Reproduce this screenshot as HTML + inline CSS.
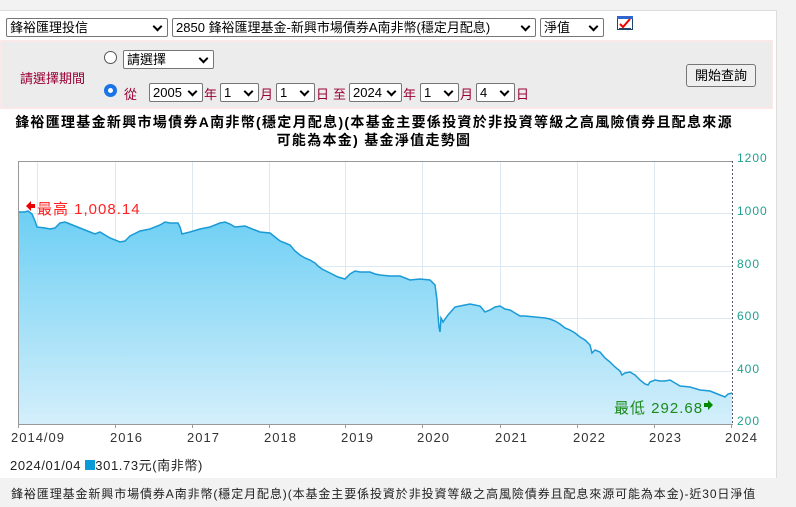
<!DOCTYPE html>
<html><head><meta charset="utf-8"><style>
*{box-sizing:border-box;margin:0;padding:0}
body{width:796px;height:507px;overflow:hidden;background:#f2f2f2;font-family:"Liberation Sans","Noto Sans CJK TC",sans-serif;position:relative;font-size:13px;color:#000}
.abs{position:absolute}
.panel{left:0;top:10px;width:777px;height:468px;background:#fff;border-top:1px solid #ddd;border-right:1px solid #ddd}
.sel{position:absolute;height:19px;border:1px solid #767676;border-radius:2px;background:#fff;font-size:13px;line-height:17px;padding-left:3px;white-space:nowrap;overflow:hidden}
.sel:after{content:"";position:absolute;right:6px;top:4px;width:5px;height:5px;border-right:2px solid #000;border-bottom:2px solid #000;transform:rotate(45deg)}
.form{left:0;top:40px;width:773px;height:69px;background:#ececec;border:2px solid #fbe8e8}
.red{color:#990033;font-size:13px}
.radio{position:absolute;width:13px;height:13px;border-radius:50%;border:1px solid #555;background:#fff}
.title{left:8px;width:732px;text-align:center;font-weight:bold;font-size:14px;letter-spacing:1.3px;line-height:18px}
.yl{position:absolute;left:737px;color:#20a090;font-size:12px;letter-spacing:1px}
.xl{position:absolute;top:430px;color:#333;font-size:13px;letter-spacing:1px}
</style></head><body>
<div class="abs panel"></div>
<div class="sel" style="left:6px;top:18px;width:162px">鋒裕匯理投信</div>
<div class="sel" style="left:172px;top:18px;width:364px">2850 鋒裕匯理基金-新興市場債券A南非幣(穩定月配息)</div>
<div class="sel" style="left:540px;top:18px;width:64px">淨值</div>
<svg class="abs" style="left:617px;top:16px" width="16" height="14"><rect x="0.5" y="0.5" width="15" height="13" fill="#fff" stroke="#246"/><rect x="0" y="0" width="16" height="3" fill="#36c"/><path d="M3 8l3 3 7-8" stroke="#e00" stroke-width="2" fill="none"/><line x1="2" y1="12.5" x2="14" y2="12.5" stroke="#246"/></svg>
<div class="abs form"></div>
<div class="radio" style="left:104px;top:51px"></div>
<div class="sel" style="left:123px;top:50px;width:91px">請選擇</div>
<div class="abs red" style="left:20px;top:68px">請選擇期間</div>
<div class="radio" style="left:104px;top:84px;border:4px solid #1a73e8"></div>
<div class="abs red" style="left:124px;top:84px">從</div>
<div class="sel" style="left:149px;top:83px;width:54px">2005</div><div class="abs red" style="left:204px;top:84px">年</div>
<div class="sel" style="left:220px;top:83px;width:39px">1</div><div class="abs red" style="left:260px;top:84px">月</div>
<div class="sel" style="left:276px;top:83px;width:39px">1</div><div class="abs red" style="left:316px;top:84px">日</div>
<div class="abs red" style="left:333px;top:84px">至</div>
<div class="sel" style="left:349px;top:83px;width:53px">2024</div><div class="abs red" style="left:403px;top:84px">年</div>
<div class="sel" style="left:420px;top:83px;width:39px">1</div><div class="abs red" style="left:460px;top:84px">月</div>
<div class="sel" style="left:476px;top:83px;width:39px">4</div><div class="abs red" style="left:516px;top:84px">日</div>
<div class="abs" style="left:686px;top:64px;width:70px;height:23px;border:1px solid #767676;border-radius:3px;background:#efefef;text-align:center;line-height:21px;font-size:13px">開始查詢</div>
<div class="abs title" style="top:113px">鋒裕匯理基金新興市場債券A南非幣(穩定月配息)(本基金主要係投資於非投資等級之高風險債券且配息來源</div>
<div class="abs title" style="top:131px">可能為本金) 基金淨值走勢圖</div>
<svg class="abs" style="left:0;top:0" width="796" height="507">
<defs><linearGradient id="g" x1="0" y1="0" x2="0" y2="1"><stop offset="0" stop-color="#6ccff4"/><stop offset="1" stop-color="#d4effb"/></linearGradient></defs>
<g stroke="#dce8f2" stroke-width="1">
<line x1="18" y1="213.5" x2="732" y2="213.5"/><line x1="18" y1="266.5" x2="732" y2="266.5"/><line x1="18" y1="318.5" x2="732" y2="318.5"/><line x1="18" y1="371.5" x2="732" y2="371.5"/>
<line x1="37.5" y1="161" x2="37.5" y2="424"/><line x1="115.5" y1="161" x2="115.5" y2="424"/><line x1="192.5" y1="161" x2="192.5" y2="424"/><line x1="269.5" y1="161" x2="269.5" y2="424"/><line x1="345.5" y1="161" x2="345.5" y2="424"/><line x1="422.5" y1="161" x2="422.5" y2="424"/><line x1="500.5" y1="161" x2="500.5" y2="424"/><line x1="577.5" y1="161" x2="577.5" y2="424"/><line x1="654.5" y1="161" x2="654.5" y2="424"/>
</g>
<path id="p" d="M18 212L25 212 28 211 32 214 35 221 37 227 45 228 50 229 55 228 60 223 65 222 70 224 80 228 90 232 95 234 100 232 110 238 120 242 125 241 130 236 140 231 150 229 160 225 165 222 170 223 178 223 180 227 182 234 190 232 200 229 210 227 220 223 225 222 230 224 235 227 245 226 255 230 260 232 270 233 275 237 280 241 290 245 295 251 300 255 305 258 310 260 315 263 318 266 322 269 330 273 338 277 345 279 350 274 355 271 360 272 370 272 375 274 380 275 390 276 400 276 410 280 420 279 430 280 435 285 437 300 438 315 439 327 440 332 441 318 443 322 448 315 455 307 460 306 465 305 470 304 480 306 485 312 490 310 495 307 500 306 505 309 510 310 515 313 520 316 525 316 535 317 545 318 550 319 555 321 560 324 565 328 570 330 575 333 580 337 585 340 590 345 592 353 595 350 600 352 605 358 610 362 615 367 620 371 622 375 625 373 630 372 635 375 640 380 645 384 648 385 650 382 655 380 660 381 665 381 670 380 675 383 680 386 690 387 700 390 710 391 715 393 720 395 725 397 728 394 732 393" fill="none"/>
<path d="M18 212L25 212 28 211 32 214 35 221 37 227 45 228 50 229 55 228 60 223 65 222 70 224 80 228 90 232 95 234 100 232 110 238 120 242 125 241 130 236 140 231 150 229 160 225 165 222 170 223 178 223 180 227 182 234 190 232 200 229 210 227 220 223 225 222 230 224 235 227 245 226 255 230 260 232 270 233 275 237 280 241 290 245 295 251 300 255 305 258 310 260 315 263 318 266 322 269 330 273 338 277 345 279 350 274 355 271 360 272 370 272 375 274 380 275 390 276 400 276 410 280 420 279 430 280 435 285 437 300 438 315 439 327 440 332 441 318 443 322 448 315 455 307 460 306 465 305 470 304 480 306 485 312 490 310 495 307 500 306 505 309 510 310 515 313 520 316 525 316 535 317 545 318 550 319 555 321 560 324 565 328 570 330 575 333 580 337 585 340 590 345 592 353 595 350 600 352 605 358 610 362 615 367 620 371 622 375 625 373 630 372 635 375 640 380 645 384 648 385 650 382 655 380 660 381 665 381 670 380 675 383 680 386 690 387 700 390 710 391 715 393 720 395 725 397 728 394 732 393L732 424 18 424Z" fill="url(#g)"/>
<use href="#p" stroke="#1a9ad6" stroke-width="1.5"/>
<line x1="18.5" y1="161" x2="18.5" y2="424" stroke="#999"/>
<line x1="18" y1="161.5" x2="732" y2="161.5" stroke="#999"/>
<line x1="18" y1="424.5" x2="733" y2="424.5" stroke="#999"/>
<line x1="732.5" y1="161" x2="732.5" y2="424" stroke="#556" stroke-dasharray="2,2"/>
<g stroke="#999"><line x1="18.5" y1="424" x2="18.5" y2="428"/><line x1="115.5" y1="424" x2="115.5" y2="428"/><line x1="192.5" y1="424" x2="192.5" y2="428"/><line x1="269.5" y1="424" x2="269.5" y2="428"/><line x1="345.5" y1="424" x2="345.5" y2="428"/><line x1="422.5" y1="424" x2="422.5" y2="428"/><line x1="500.5" y1="424" x2="500.5" y2="428"/><line x1="577.5" y1="424" x2="577.5" y2="428"/><line x1="654.5" y1="424" x2="654.5" y2="428"/><line x1="731.5" y1="424" x2="731.5" y2="428"/></g>
<path d="M26 206l5-5v3h4v4h-4v3z" fill="#e00"/>
<path d="M713 405l-5-5v3h-4v4h4v3z" fill="#080"/>
</svg>
<div class="abs" style="left:37px;top:198px;color:#f22;font-size:15px;letter-spacing:1px">最高 1,008.14</div>
<div class="abs" style="left:614px;top:397px;color:#1a8a1a;font-size:15px;letter-spacing:1px">最低 292.68</div>
<div class="yl" style="top:151px">1200</div><div class="yl" style="top:204px">1000</div><div class="yl" style="top:257px">800</div><div class="yl" style="top:309px">600</div><div class="yl" style="top:362px">400</div><div class="yl" style="top:414px">200</div>
<div class="xl" style="left:11px">2014/09</div><div class="xl" style="left:110px">2016</div><div class="xl" style="left:187px">2017</div><div class="xl" style="left:264px">2018</div><div class="xl" style="left:341px">2019</div><div class="xl" style="left:417px">2020</div><div class="xl" style="left:495px">2021</div><div class="xl" style="left:573px">2022</div><div class="xl" style="left:649px">2023</div><div class="xl" style="left:725px">2024</div>
<div class="abs" style="left:10px;top:455px;font-size:13px;color:#222;letter-spacing:0.6px">2024/01/04 <span style="display:inline-block;width:10px;height:10px;background:#0a9ad8"></span>301.73元(南非幣)</div>
<div class="abs" style="left:11px;top:485px;font-size:12px;color:#222;letter-spacing:0.9px;white-space:nowrap">鋒裕匯理基金新興市場債券A南非幣(穩定月配息)(本基金主要係投資於非投資等級之高風險債券且配息來源可能為本金)-近30日淨值</div>
</body></html>
